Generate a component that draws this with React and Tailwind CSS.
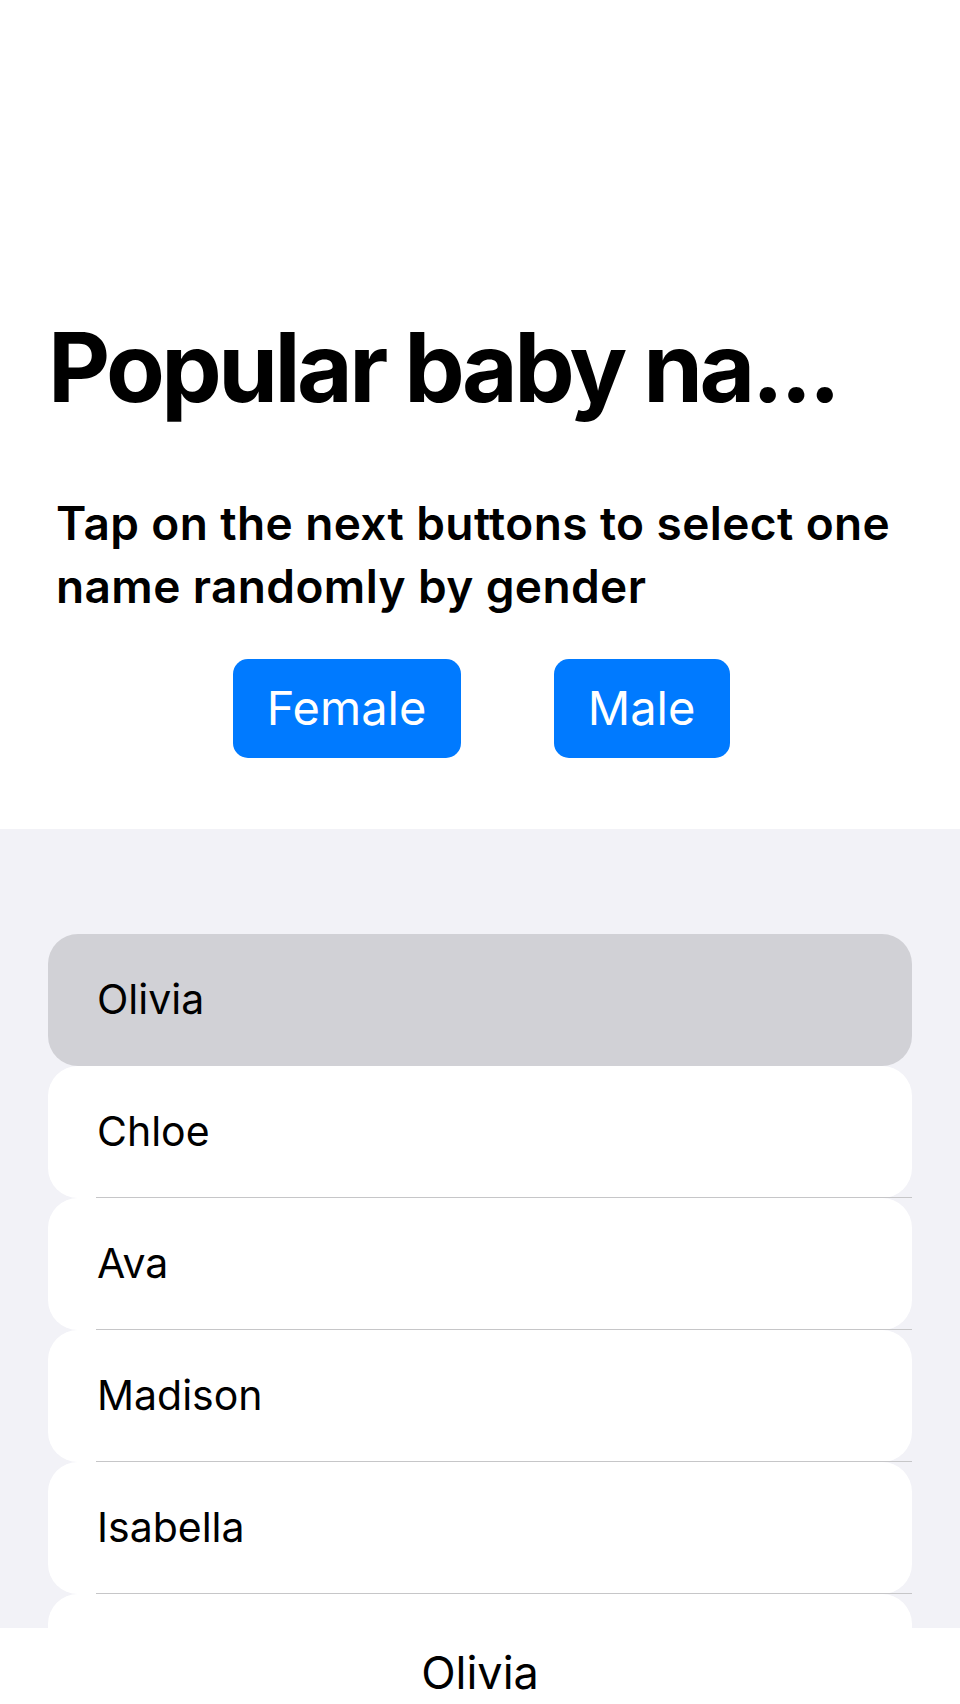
import React from 'react';

// last row is only peeking out under the bottom bar, no label visible
const names = ['Olivia', 'Chloe', 'Ava', 'Madison', 'Isabella', ''];

const NameRow = ({ name, selected, last }) => (
  <div className="relative">
    <div
      className={`h-[132px] flex items-center pl-[49px] rounded-[30px] text-[41px] text-black ${
        selected ? 'bg-[#d1d1d6]' : 'bg-white'
      }`}
    >
      {name}
    </div>
    {/* separator under every row except the selected one */}
    {!selected && !last && (
      <div className="absolute left-[48px] right-0 bottom-0 h-px bg-[#c6c6c8]" />
    )}
  </div>
);

export default function App() {
  const selected = 'Olivia';

  return (
    <div
      className="w-[960px] h-[1704px] flex flex-col bg-white overflow-hidden"
      style={{ fontFamily: 'Inter, "Noto Sans", sans-serif' }}
    >
      {/* Header */}
      <div className="h-[829px] shrink-0 flex flex-col pt-[319px]">
        <h1 className="pl-[48px] text-[96px] leading-[96px] font-bold tracking-[-3.5px] text-black whitespace-nowrap">
          Popular baby na...
        </h1>
        <p className="mt-[77px] pl-[56px] text-[46px] leading-[63px] font-semibold tracking-[0.4px] text-black whitespace-nowrap">
          Tap on the next buttons to select one
          <br />
          name randomly by gender
        </p>
        <div className="mt-[41px] flex justify-center gap-[93px] pl-[2px]">
          <button className="w-[228px] h-[99px] rounded-[15px] bg-[#007aff] text-white text-[47px] flex items-center justify-center">
            Female
          </button>
          <button className="w-[176px] h-[99px] rounded-[15px] bg-[#007aff] text-white text-[47px] flex items-center justify-center">
            Male
          </button>
        </div>
      </div>

      {/* List */}
      <div className="flex-1 bg-[#f2f2f7] overflow-hidden pt-[105px] px-[48px]">
        {names.map((n, i) => (
          <NameRow key={i} name={n} selected={n === selected} last={i === names.length - 1} />
        ))}
      </div>

      {/* Bottom bar */}
      <div className="h-[76px] shrink-0 bg-white flex justify-center pt-[22px]">
        <span className="text-[45px] leading-[45px] text-black">{selected}</span>
      </div>
    </div>
  );
}
